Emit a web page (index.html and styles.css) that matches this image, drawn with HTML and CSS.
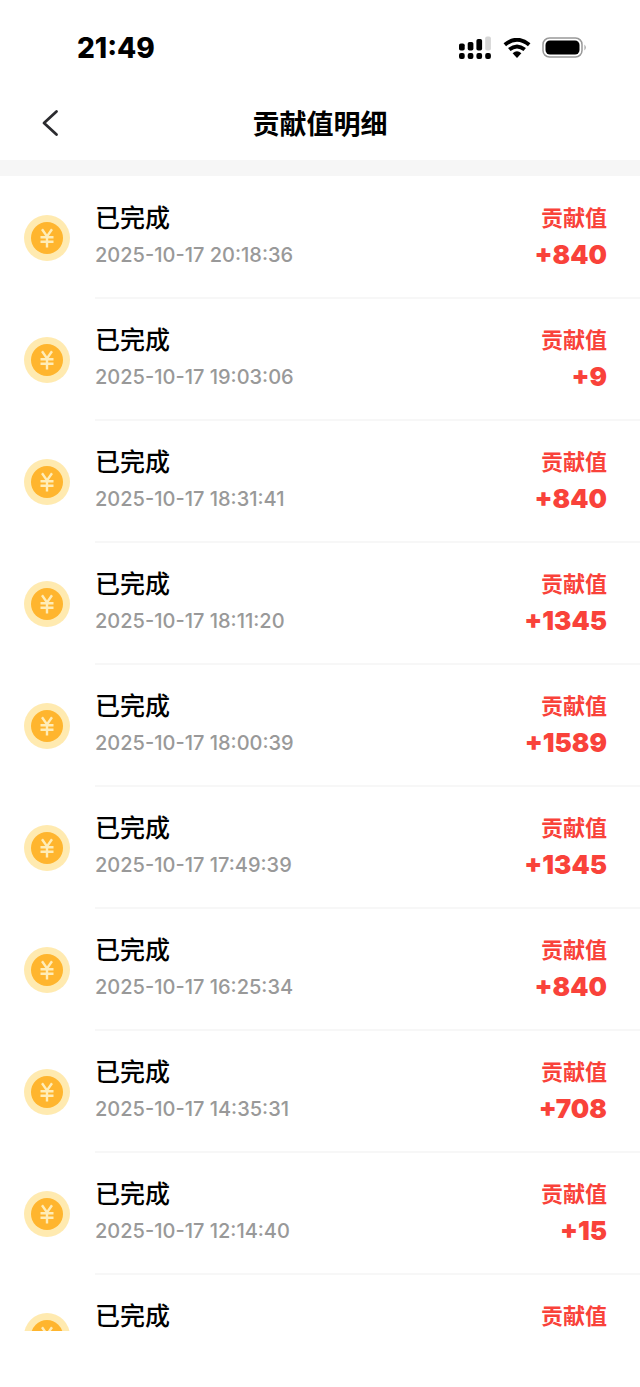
FILE: index.html
```html
<!DOCTYPE html>
<html lang="zh-CN">
<head>
<meta charset="utf-8">
<meta name="viewport" content="width=device-width, initial-scale=1">
<title>贡献值明细</title>
<link rel="stylesheet" href="styles.css">
</head>
<body>
<svg class="sprite" aria-hidden="true">
  <symbol id="coin" viewBox="0 0 46 46">
    <circle cx="23" cy="23" r="23" fill="#ffeab0"/>
    <circle cx="23" cy="23" r="16" fill="#ffb52e"/>
    <path d="M18 14.200 23 21.500l5-7.300M16.500 22.200h13M16.500 26.700h13M23 21v11.500" fill="none" stroke="#ffedb8" stroke-width="2.400"/>
  </symbol>
</svg>
<div class="screen">
  <div class="status">
    <span class="clock">21:49</span>
    <div class="indicators">
      <svg width="34" height="24" viewBox="0 0 34 24" aria-hidden="true">
        <g fill="#000">
          <rect x="1" y="7.500" width="5.700" height="7" rx="1.800"/>
          <rect x="9.700" y="6" width="5.700" height="8.500" rx="1.800"/>
          <rect x="18.400" y="3" width="5.700" height="11.500" rx="1.800"/>
          <rect x="1" y="17" width="5.700" height="6" rx="2"/>
          <rect x="9.700" y="17" width="5.700" height="6" rx="2"/>
          <rect x="18.400" y="17" width="5.700" height="6" rx="2"/>
          <rect x="27.200" y="17" width="5.700" height="6" rx="2"/>
        </g>
        <rect x="27.200" y="0.500" width="5.700" height="14" rx="1.800" fill="#d6d6d6"/>
      </svg>
      <svg width="28" height="20" viewBox="0 0 28 20" aria-hidden="true">
        <path d="M1.800 6.800Q14-3.300 26.200 6.800M6.300 11.600Q14 5.300 21.700 11.600" fill="none" stroke="#000" stroke-width="3.900"/>
        <path d="M9.600 15.200Q14 11.500 18.400 15.200L14 20Z" fill="#000"/>
      </svg>
      <svg width="46" height="22" viewBox="0 0 46 22" aria-hidden="true">
        <rect x="1" y="1" width="39" height="19" rx="6.500" fill="none" stroke="#999" stroke-width="1.500"/>
        <rect x="3.500" y="3.500" width="34" height="14" rx="4.500" fill="#000"/>
        <path d="M42.500 7.500Q45 10.500 42.500 13.500Z" fill="#999"/>
      </svg>
    </div>
  </div>
  <header class="navbar">
    <button class="back" type="button" aria-label="返回">
      <svg width="18" height="28" viewBox="0 0 18 28" aria-hidden="true"><path d="M15.500 2.500 3 14 15.500 25.500" fill="none" stroke="#2b2b2f" stroke-width="2.800" stroke-linecap="round" stroke-linejoin="round"/></svg>
    </button>
    <h1 class="title">贡献值明细</h1>
  </header>
  <ul class="records">
    <li class="record"><svg class="coin"><use href="#coin"/></svg><div class="body"><div class="info"><span class="state">已完成</span><time class="date">2025-10-17 20:18:36</time></div><div class="gain"><span class="label">贡献值</span><span class="amount">+840</span></div></div></li>
    <li class="record"><svg class="coin"><use href="#coin"/></svg><div class="body"><div class="info"><span class="state">已完成</span><time class="date">2025-10-17 19:03:06</time></div><div class="gain"><span class="label">贡献值</span><span class="amount">+9</span></div></div></li>
    <li class="record"><svg class="coin"><use href="#coin"/></svg><div class="body"><div class="info"><span class="state">已完成</span><time class="date">2025-10-17 18:31:41</time></div><div class="gain"><span class="label">贡献值</span><span class="amount">+840</span></div></div></li>
    <li class="record"><svg class="coin"><use href="#coin"/></svg><div class="body"><div class="info"><span class="state">已完成</span><time class="date">2025-10-17 18:11:20</time></div><div class="gain"><span class="label">贡献值</span><span class="amount">+1345</span></div></div></li>
    <li class="record"><svg class="coin"><use href="#coin"/></svg><div class="body"><div class="info"><span class="state">已完成</span><time class="date">2025-10-17 18:00:39</time></div><div class="gain"><span class="label">贡献值</span><span class="amount">+1589</span></div></div></li>
    <li class="record"><svg class="coin"><use href="#coin"/></svg><div class="body"><div class="info"><span class="state">已完成</span><time class="date">2025-10-17 17:49:39</time></div><div class="gain"><span class="label">贡献值</span><span class="amount">+1345</span></div></div></li>
    <li class="record"><svg class="coin"><use href="#coin"/></svg><div class="body"><div class="info"><span class="state">已完成</span><time class="date">2025-10-17 16:25:34</time></div><div class="gain"><span class="label">贡献值</span><span class="amount">+840</span></div></div></li>
    <li class="record"><svg class="coin"><use href="#coin"/></svg><div class="body"><div class="info"><span class="state">已完成</span><time class="date">2025-10-17 14:35:31</time></div><div class="gain"><span class="label">贡献值</span><span class="amount">+708</span></div></div></li>
    <li class="record"><svg class="coin"><use href="#coin"/></svg><div class="body"><div class="info"><span class="state">已完成</span><time class="date">2025-10-17 12:14:40</time></div><div class="gain"><span class="label">贡献值</span><span class="amount">+15</span></div></div></li>
    <li class="record"><svg class="coin"><use href="#coin"/></svg><div class="body"><div class="info"><span class="state">已完成</span></div><div class="gain"><span class="label">贡献值</span></div></div></li>
  </ul>
</div>
</body>
</html>
```

FILE: styles.css
```css
* {
  box-sizing: border-box;
}

body {
  margin: 0;
  background: #fff;
  color: #000;
  font-family: Inter, "Noto Sans CJK SC", sans-serif;
}

.sprite {
  position: absolute;
  width: 0;
  height: 0;
}

.screen {
  display: flex;
  flex-direction: column;
  height: 100vh;
  padding-bottom: 56px;
}

.status {
  display: flex;
  flex-shrink: 0;
  align-items: center;
  justify-content: space-between;
  height: 88px;
  padding: 8px 52px 0 77px;
}

.clock {
  font-size: 28px;
  font-weight: 800;
  line-height: 32px;
}

.indicators {
  display: flex;
  align-items: center;
  gap: 11px;
}

.navbar {
  display: grid;
  flex-shrink: 0;
  grid-template-columns: 80px 1fr 80px;
  align-items: center;
  height: 88px;
  border-bottom: 16px solid #f6f6f6;
}

.back {
  display: flex;
  padding: 6px 0 8px 41px;
  border: 0;
  background: none;
}

.title {
  margin: 0;
  padding-top: 2px;
  font-size: 27px;
  font-weight: 700;
  line-height: 40px;
  text-align: center;
}

.records {
  flex: 1;
  min-height: 0;
  margin: 0;
  padding: 1px 0 0;
  overflow: hidden;
  list-style: none;
}

.record {
  display: flex;
  height: 122px;
  padding-left: 24px;
}

.coin {
  flex-shrink: 0;
  width: 46px;
  height: 46px;
  margin: 38px 25px 0 0;
}

.body {
  display: flex;
  flex: 1;
  justify-content: space-between;
  padding: 22px 33px 0 0;
  border-bottom: 2px solid #f7f7f7;
}

.info,
.gain {
  display: flex;
  flex-direction: column;
}

.gain {
  align-items: flex-end;
  color: #f9423a;
}

.state,
.label {
  font-size: 25px;
  font-weight: 500;
  line-height: 38px;
}

.label {
  font-size: 22px;
  font-weight: 700;
}

.date,
.amount {
  font-size: 20px;
  line-height: 36px;
}

.date {
  color: #999;
  font-weight: 500;
}

.amount {
  font-size: 26px;
  font-weight: 900;
}
```
